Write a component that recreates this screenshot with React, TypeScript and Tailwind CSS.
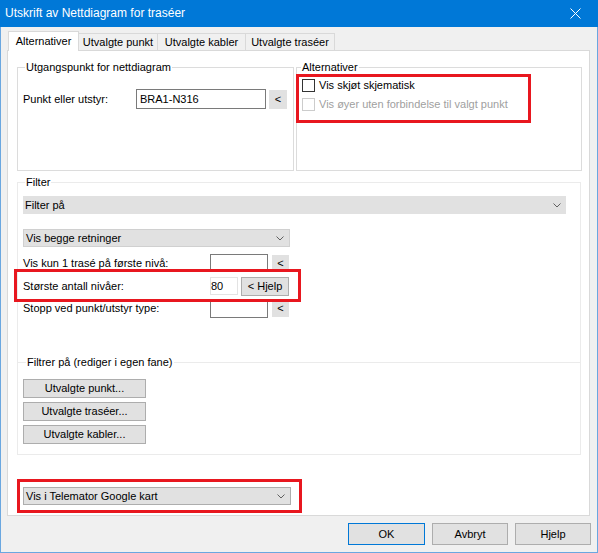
import React from 'react';

const font = "font-['Liberation_Sans',Arial,sans-serif]";

function Chevron() {
  return (
    <svg width="8" height="5" viewBox="0 0 8 5" className="shrink-0">
      <path d="M0.5 0.5 L4 4 L7.5 0.5" fill="none" stroke="#606060" strokeWidth="1" />
    </svg>
  );
}

function Combo({ text, className }: { text: string; className: string }) {
  return (
    <div className={`flex items-center justify-between bg-[#e1e1e1] pl-[2px] pr-[5px] ${className}`}>
      <span>{text}</span>
      <Chevron />
    </div>
  );
}

function SmallBtn({ label, className }: { label: string; className: string }) {
  return (
    <div className={`flex items-center justify-center bg-[#e1e1e1] border border-[#adadad] ${className}`}>
      {label}
    </div>
  );
}

export default function App() {
  const tabs = [
    { name: 'Utvalgte punkt', w: 'w-[79px]' },
    { name: 'Utvalgte kabler', w: 'w-[88px]' },
    { name: 'Utvalgte traséer', w: 'w-[89px]' },
  ];

  return (
    <div className={`relative w-[598px] h-[553px] bg-[#f0f0f0] text-[11px] leading-[13px] text-black ${font} overflow-hidden`}>
      {/* Title bar */}
      <div className="flex items-center justify-between h-[27px] bg-[#0078d7] text-white pl-[5px]">
        <span className="text-[12px]">Utskrift av Nettdiagram for traséer</span>
        <div className="w-[46px] h-[27px] flex items-center justify-center mr-[0px]">
          <svg width="11" height="11" viewBox="0 0 11 11">
            <path d="M0.5 0.5 L10.5 10.5 M10.5 0.5 L0.5 10.5" stroke="white" strokeWidth="1" />
          </svg>
        </div>
      </div>

      <div className="h-[526px] border-x border-b border-[#6aa7e0] flex flex-col">
        {/* Tabs */}
        <div className="flex items-end ml-[7px] mt-[4px] relative z-10">
          <div className="w-[71px] h-[20px] bg-white border-x border-t border-[#d9d9d9] flex items-center justify-center -mb-px">
            Alternativer
          </div>
          {tabs.map((t) => (
            <div
              key={t.name}
              className={`${t.w} h-[17px] bg-[#f0f0f0] border-r border-t border-[#d9d9d9] flex items-center justify-center`}
            >
              {t.name}
            </div>
          ))}
        </div>

        {/* Tab panel */}
        <div className="ml-[6px] w-[583px] h-[466px] bg-white border border-[#d9d9d9] flex flex-col">
          {/* Top groups */}
          <div className="flex mt-[10px] ml-[9px]">
            <fieldset className="w-[277px] h-[110px] border border-[#dcdcdc] px-[4px]">
              <legend className="ml-[3px] px-[1px]">Utgangspunkt for nettdiagram</legend>
              <div className="flex items-center mt-[15px] pl-[1px]">
                <span className="w-[113px]">Punkt eller utstyr:</span>
                <div className="w-[130px] h-[20px] border border-[#7a7a7a] pl-[3px] flex items-center">BRA1-N316</div>
                <SmallBtn label="<" className="ml-[3px] w-[18px] h-[19px] border-[#e1e1e1]" />
              </div>
            </fieldset>
            <fieldset className="ml-[2px] w-[286px] h-[110px] border border-[#dcdcdc]">
              <legend className="ml-[4px] px-[1px]">Alternativer</legend>
              <div className="mt-[5px] ml-[5px] flex flex-col gap-[6px]">
                <div className="flex items-center gap-[4px]">
                  <div className="w-[13px] h-[13px] border border-[#333333] bg-white" />
                  <span>Vis skjøt skjematisk</span>
                </div>
                <div className="flex items-center gap-[4px] text-[#a0a0a0]">
                  <div className="w-[13px] h-[13px] border border-[#cccccc] bg-white" />
                  <span>Vis øyer uten forbindelse til valgt punkt</span>
                </div>
              </div>
            </fieldset>
          </div>

          {/* Filter group */}
          <fieldset className="mt-[5px] ml-[9px] w-[564px] h-[279px] border border-[#ebebeb] px-[4px]">
            <legend className="ml-[3px] px-[1px]">Filter</legend>
            <div className="flex flex-col pl-[1px]">
              <Combo text="Filter på" className="mt-[7px] w-[543px] h-[18px]" />
              <Combo text="Vis begge retninger" className="mt-[15px] w-[267px] h-[18px] border border-[#d0d0d0]" />

              <div className="flex items-center mt-[7px] h-[18px]">
                <span className="w-[187px]">Vis kun 1 trasé på første nivå:</span>
                <div className="w-[58px] h-[18px] border border-[#7a7a7a]" />
                <SmallBtn label="<" className="ml-[4px] w-[17px] h-[17px] border-[#e1e1e1]" />
              </div>
              <div className="flex items-center mt-[4px] h-[20px]">
                <span className="w-[187px]">Største antall nivåer:</span>
                <div className="w-[28px] h-[18px] border border-[#e3e3e3] flex items-center">80</div>
                <SmallBtn label="< Hjelp" className="ml-[3px] w-[48px] h-[19px]" />
              </div>
              <div className="flex items-center mt-[3px] h-[19px]">
                <span className="w-[187px]">Stopp ved punkt/utstyr type:</span>
                <div className="w-[58px] h-[19px] border border-[#7a7a7a]" />
                <SmallBtn label="<" className="ml-[4px] w-[17px] h-[17px] border-[#e1e1e1]" />
              </div>
            </div>

            <fieldset className="-mx-[4px] mt-[38px] border-t border-[#ebebeb] px-[5px]">
              <legend className="ml-[3px] px-[1px]">Filtrer på (rediger i egen fane)</legend>
              <div className="flex flex-col gap-[4px] mt-[10px]">
                <SmallBtn label="Utvalgte punkt..." className="w-[123px] h-[19px]" />
                <SmallBtn label="Utvalgte traséer..." className="w-[123px] h-[19px]" />
                <SmallBtn label="Utvalgte kabler..." className="w-[123px] h-[19px]" />
              </div>
            </fieldset>
          </fieldset>

          <Combo text="Vis i Telemator Google kart" className="mt-[32px] ml-[15px] w-[268px] h-[18px] border border-[#adadad]" />
        </div>

        {/* Dialog buttons */}
        <div className="flex justify-end gap-[7px] mt-[7px] mr-[6px]">
          <div className="w-[77px] h-[22px] bg-[#e1e1e1] border border-[#0078d7] flex items-center justify-center">OK</div>
          <div className="w-[76px] h-[22px] bg-[#e1e1e1] border border-[#adadad] flex items-center justify-center">Avbryt</div>
          <div className="w-[76px] h-[22px] bg-[#e1e1e1] border border-[#adadad] flex items-center justify-center">Hjelp</div>
        </div>
      </div>

      {/* Red annotation frames */}
      <div className="absolute left-[296px] top-[74px] w-[235px] h-[49px] border-[3px] border-[#e8171f]" />
      <div className="absolute left-[14px] top-[269px] w-[287px] h-[33px] border-[3px] border-[#e8171f]" />
      <div className="absolute left-[17px] top-[479px] w-[285px] h-[34px] border-[3px] border-[#e8171f]" />
    </div>
  );
}
